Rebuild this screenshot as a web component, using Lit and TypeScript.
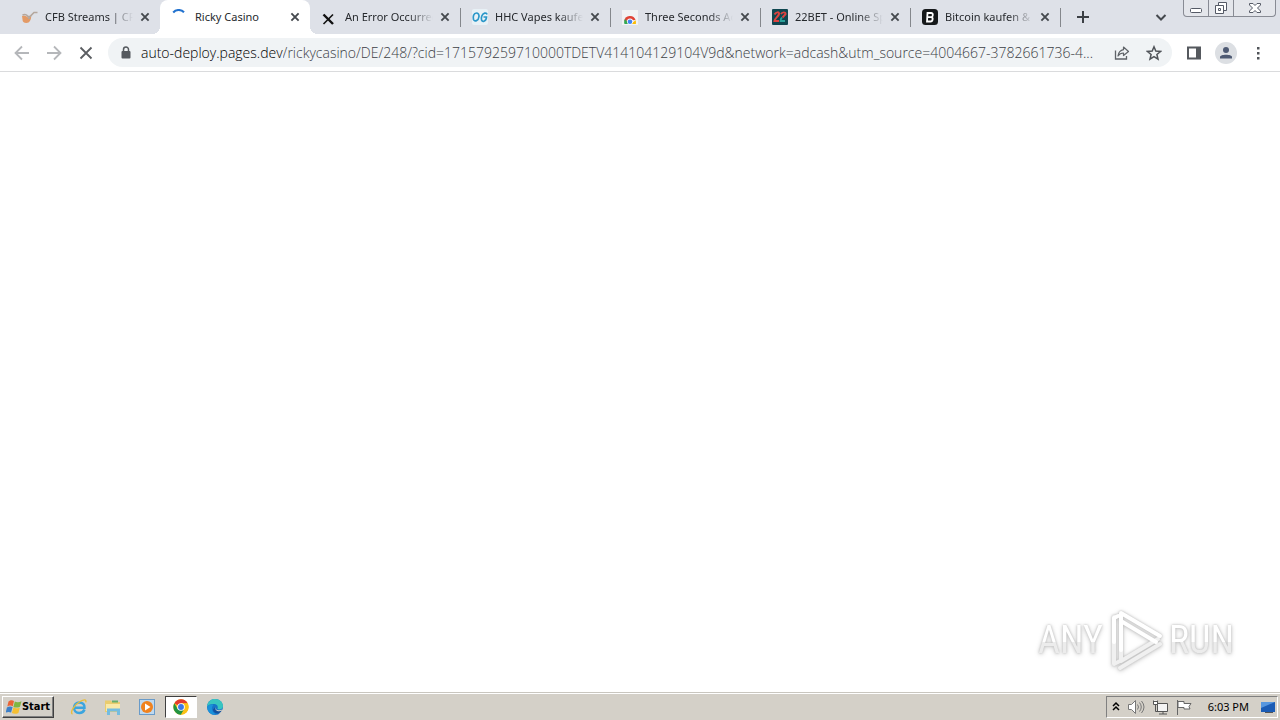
import { LitElement, html, svg, css, TemplateResult } from "lit";
import { customElement, property } from "lit/decorators.js";
import { classMap } from "lit/directives/class-map.js";

const cross = html`<svg width="10" height="10" viewBox="0 0 10 10"><path d="M1.4 1.4l7.2 7.2M8.6 1.4l-7.2 7.2" stroke="#45494e" stroke-width="1.9" fill="none"/></svg>`;

const chromeDisc = (s: number) => html`<svg width=${s} height=${s} viewBox="0 0 48 48">
  <circle cx="24" cy="24" r="23" fill="#fbc116"/>
  <path d="M24 24L4.1 12.5A23 23 0 0 1 43.9 12.5H24z" fill="#e33b2e"/>
  <path d="M4.1 12.5A23 23 0 0 0 24 47L34 29.7 24 24 14 29.7z" fill="#229342"/>
  <path d="M24 13.5h19.9A23 23 0 0 1 24 47l10-17.3z" fill="#fbc116"/>
  <circle cx="24" cy="24" r="11.5" fill="#fff"/><circle cx="24" cy="24" r="8.8" fill="#3b78e7"/></svg>`;

const icons: Record<string, TemplateResult> = {
  cfb: html`<svg width="16" height="16" viewBox="0 0 16 16"><path d="M0 7c2-.6 4-.2 5.200.9 1.500.8 3 .6 4-.3-.2 3.500-1.500 6.400-4.700 6.400-3 0-4-1.500-4-3.500z" fill="#e39a66"/><path d="M.5 6c2.500-1 4.500 0 5 1.200 1.500 1 3 .3 4-1.200L12 3.500h3.500M6 9.500l2-.5" fill="none" stroke="#b4a79d" stroke-width="1.600"/></svg>`,
  spin: html`<svg width="16" height="16" viewBox="0 0 16 16"><path d="M1.200 3.500A7.200 7.200 0 0 1 12 3.300" fill="none" stroke="#2272cf" stroke-width="2"/></svg>`,
  x: html`<svg width="16" height="16" viewBox="0 0 16 16"><path d="M1.500 5.500L11 15" stroke="#111" stroke-width="2.400"/><path d="M11 5.500L1.500 15" stroke="#111" stroke-width="1.600"/></svg>`,
  og: html`<svg width="16" height="16" viewBox="0 0 16 16"><rect width="16" height="16" rx="2" fill="#e8f1f6"/><path d="M4.500 4C1.500 4 .8 8 1.500 10.500 2.500 13 6.500 12 7 7.500 7.200 5.500 6 4 4.500 4zM15 5.500c-.5-2.300-4-1.800-5.200 1.500C8.500 10.500 9.800 13 12 12.200c1.500-.5 2.400-2 2.500-4.200h-3" fill="none" stroke="#2b97c9" stroke-width="1.700"/></svg>`,
  store: html`<svg width="16" height="16" viewBox="0 0 16 16"><rect y="1" width="16" height="15" fill="#f1f3f4"/><path d="M2.200 12A5.800 5.800 0 0 1 13.500 11L8 11.500z" fill="#e04235"/><path d="M2.200 14c-.3-2 .2-3 1-4L7 15H2.500z" fill="#34a853"/><path d="M13.500 11.200c.5 1 .5 2.500.3 3.800H9z" fill="#fbbc04"/><circle cx="8" cy="12.500" r="3" fill="#fff"/><circle cx="8" cy="12.700" r="2.300" fill="#4285f4"/></svg>`,
  bet: html`<svg width="16" height="16" viewBox="0 0 16 16"><rect width="16" height="16" rx="1" fill="#0f4650"/><path d="M2.500 5.500C4 3 7.500 2.500 7 5S3 9 2.500 12H7" fill="none" stroke="#dc433f" stroke-width="2"/><path d="M10 8.500c-1 1-1.500 2-1.500 3.500H13" fill="none" stroke="#2ba19a" stroke-width="1.800"/><path d="M9 5.200C10 3 13.800 2.700 13.600 5L10.500 8.500" fill="none" stroke="#dc433f" stroke-width="1.900"/></svg>`,
  bit: html`<svg width="16" height="16" viewBox="0 0 16 16"><rect width="16" height="16" rx="3.500" fill="#16191b"/><path d="M5.500 4h3.700c2.300 0 2 3.700.1 4.100 2.100.3 1.700 4.400-.8 4.400H5z M6 8.200h3.500" fill="none" stroke="#fff" stroke-width="1.800"/></svg>`,
};

@customElement("browser-tab")
class BrowserTab extends LitElement {
  @property() icon = "";
  @property() label = "";
  @property({ type: Boolean }) active = false;
  @property({ type: Boolean }) divided = false;
  static styles = css`
    :host { flex: 0 1 150px; min-width: 0; display: block; }
    .tab { box-sizing: border-box; height: 34px; display: flex; align-items: center; padding: 0 10px 0 12px; position: relative; }
    .tab.active { background: #fff; border-radius: 8px 8px 0 0; }
    .tab.active::before, .tab.active::after { content: ""; position: absolute; bottom: 0; width: 8px; height: 8px; }
    .tab.active::before { left: -8px; background: radial-gradient(circle at 0 0, transparent 8px, #fff 8px); }
    .tab.active::after { right: -8px; background: radial-gradient(circle at 100% 0, transparent 8px, #fff 8px); }
    .tab.divided::after { content: ""; position: absolute; right: -1px; top: 8px; width: 1px; height: 19px; background: #84878c; }
    .icon { flex: none; display: flex; width: 16px; height: 16px; margin-right: 7px; }
    .title { flex: 1; min-width: 0; overflow: hidden; white-space: nowrap; font-size: 11px; line-height: 16px; color: #26292d; -webkit-mask-image: linear-gradient(90deg, #000 72%, transparent 100%); }
    .active .title { -webkit-mask-image: none; }
    button { flex: none; display: flex; margin: 0 0 0 7px; padding: 0; border: 0; background: none; }
  `;
  render() {
    return html`<div class=${classMap({ tab: true, active: this.active, divided: this.divided })}>
      <span class="icon">${icons[this.icon]}</span><span class="title">${this.label}</span>
      <button aria-label="Close tab">${cross}</button></div>`;
  }
}

@customElement("app-root")
class AppRoot extends LitElement {
  static styles = css`
    :host { display: flex; flex-direction: column; min-height: 100vh; background: #fff; font-family: "Noto Sans", "Open Sans", sans-serif; }
    button { font: inherit; padding: 0; margin: 0; border: 0; background: none; display: flex; align-items: center; justify-content: center; }
    .strip { display: flex; align-items: center; height: 34px; background: #dee1e8; padding-left: 10px; }
    .new { width: 24px; height: 24px; margin-left: 11px; }
    .space { flex: 1; }
    .caption { align-self: flex-start; display: flex; box-sizing: border-box; height: 17px; margin: 0 4px 0 14px; border: 1px solid #888b94; border-top: 0; border-radius: 0 0 4px 4px; background: #e4e6eb; }
    .caption button { width: 25px; border-right: 1px solid #888b94; }
    .caption button:last-child { width: 41px; border: 0; }
    .bar { display: flex; align-items: center; height: 37px; border-bottom: 1px solid #dadbdd; padding: 0 6px; }
    .bar > button { width: 32px; height: 32px; flex: none; }
    .omni { flex: 1; min-width: 0; box-sizing: border-box; height: 29px; margin: 0 6px; padding: 0 2px 0 10px; border-radius: 15px; background: #f0f3f5; display: flex; align-items: center; }
    .address { flex: 1; min-width: 0; display: flex; align-items: center; font-family: "Open Sans", "Noto Sans", sans-serif; font-weight: 300; font-size: 14px; line-height: 20px; color: #000; margin: 0 8px 0 7px; }
    .address input { flex: 1; min-width: 0; height: 20px; border: 0; padding: 0; margin: 0; background: none; outline: none; font: inherit; color: #3c4045; text-overflow: ellipsis; }
    .omni button { width: 32px; height: 28px; flex: none; }
    main { flex: 1; display: flex; align-items: flex-end; justify-content: flex-end; padding: 0 46px 20px 0; }
    .mark { display: flex; align-items: center; gap: 3px; font: 38px/44px "Liberation Sans Narrow", "Roboto Condensed", sans-serif; filter: drop-shadow(0 0 1px #bdbdbd) drop-shadow(0 1px 2px #d0d0d0); }
    .mark span { color: transparent; background: linear-gradient(#fff 54%, #ececec 54%); -webkit-background-clip: text; background-clip: text; }
    footer { display: flex; align-items: center; height: 26px; background: #d4d0c8; border-top: 1px solid #c9c6bf; box-shadow: inset 0 1px #fff; padding: 1px 2px 0; }
    .start { width: 52px; height: 22px; box-sizing: border-box; border: 1px solid; border-color: #fff #404040 #404040 #fff; box-shadow: inset -1px -1px #808080; font: bold 11px/14px "DejaVu Sans Condensed", sans-serif; color: #000; }
    .quick { display: flex; margin-left: 9px; gap: 2px; }
    .quick button { width: 32px; height: 22px; box-sizing: border-box; }
    .quick .on { background: #fff; border: 1px solid; border-color: #404040 #fff #fff #404040; }
    .tray { display: flex; align-items: center; box-sizing: border-box; height: 22px; gap: 7px; padding: 0 1px 0 5px; border: 1px solid; border-color: #808080 #fff #fff #808080; }
    time { font-size: 11px; line-height: 16px; color: #000; margin: 0 4px 0 9px; white-space: nowrap; }
  `;

  private tabs = [
    { icon: "cfb", label: "CFB Streams | CFB" },
    { icon: "spin", label: "Ricky Casino", active: true },
    { icon: "x", label: "An Error Occurred", divided: true },
    { icon: "og", label: "HHC Vapes kaufen", divided: true },
    { icon: "store", label: "Three Seconds Ad", divided: true },
    { icon: "bet", label: "22BET - Online Sp", divided: true },
    { icon: "bit", label: "Bitcoin kaufen & li", divided: true },
  ];

  private glyph(size: number, body: unknown) {
    return html`<svg width=${size} height=${size} viewBox="0 0 16 16" fill="none">${body}</svg>`;
  }

  render() {
    return html`
      <div class="strip">
        ${this.tabs.map((t) => html`<browser-tab .icon=${t.icon} .label=${t.label} .active=${!!t.active} .divided=${!!t.divided}></browser-tab>`)}
        <button class="new" aria-label="New tab">${this.glyph(16, svg`<path d="M8 2v12M2 8h12" stroke="#3c4045" stroke-width="2"/>`)}</button>
        <span class="space"></span>
        <button aria-label="Search tabs">${this.glyph(16, svg`<path d="M3.500 6L8 10.500 12.500 6" stroke="#45494e" stroke-width="2"/>`)}</button>
        <div class="caption">
          <button aria-label="Minimize"><svg width="14" height="16" viewBox="0 0 14 16"><rect x="1.500" y="8.500" width="11" height="4" rx="1" fill="#fff" stroke="#555a66"/></svg></button>
          <button aria-label="Restore"><svg width="14" height="16" viewBox="0 0 14 16"><path d="M4.500 2.500h8v8h-8z" fill="#fff" stroke="#555a66"/><path d="M1.500 5.500h8v8h-8z" fill="#fff" stroke="#555a66"/><path d="M4.500 8.500h2v2h-2z" stroke="#555a66" fill="#fff"/></svg></button>
          <button aria-label="Close"><svg width="14" height="16" viewBox="0 0 14 16"><path d="M1.500 3.500h3.500l2 2 2-2h3.500v1.500L9.500 8l3 3v1.500H9l-2-2-2 2H1.500V11l3-3-3-3z" fill="#fff" stroke="#555a66"/></svg></button>
        </div>
      </div>
      <div class="bar">
        <button aria-label="Back">${this.glyph(16, svg`<path d="M15 8H2M8 1.500L1.500 8 8 14.500" stroke="#b5b7ba" stroke-width="1.800"/>`)}</button>
        <button aria-label="Forward">${this.glyph(16, svg`<path d="M1 8h13M8 1.500L14.500 8 8 14.500" stroke="#b5b7ba" stroke-width="1.800"/>`)}</button>
        <button aria-label="Stop">${this.glyph(16, svg`<path d="M2.500 2.500l11 11M13.500 2.500l-11 11" stroke="#5a5d61" stroke-width="1.800"/>`)}</button>
        <div class="omni">
          ${this.glyph(16, svg`<rect x="3.500" y="6" width="9" height="7.500" rx="1" fill="#55595e"/><path d="M5.500 7V4.500a2.500 2.500 0 0 1 5 0V7" stroke="#55595e" stroke-width="1.500"/>`)}
          <label class="address"><span>auto-deploy.pages.dev</span><input aria-label="Address" .value=${"/rickycasino/DE/248/?cid=171579259710000TDETV414104129104V9d&network=adcash&utm_source=4004667-3782661736-4..."} /></label>
          <button aria-label="Share">${this.glyph(16, svg`<path d="M1.500 5.500v8.500h11v-3" stroke="#5f6368" stroke-width="1.300"/><path d="M9.500 2l5 4.500-5 4V8C7 8 5.300 9 4 11c.5-3.500 2.500-5.800 5.500-6.300z" stroke="#5f6368" stroke-width="1.200" stroke-linejoin="round"/>`)}</button>
          <button aria-label="Bookmark">${this.glyph(16, svg`<path d="M8 1.800l1.800 4.300 4.700.4-3.600 3 1.100 4.600L8 11.600l-4 2.500 1.100-4.600-3.600-3 4.700-.4z" stroke="#505459" stroke-width="1.500"/>`)}</button>
        </div>
        <button aria-label="Side panel">${this.glyph(16, svg`<path d="M2 2.500h12v11H2z" stroke="#55595e" stroke-width="2"/><path d="M10 2.500h4v11h-4z" fill="#55595e"/>`)}</button>
        <button aria-label="Profile"><svg width="22" height="22" viewBox="0 0 22 22"><circle cx="11" cy="11" r="11" fill="#dcdfe3"/><circle cx="11" cy="8" r="3" fill="#4e5a73"/><path d="M5 16.500v-1.500c0-3 12-3 12 0v1.500z" fill="#4e5a73"/></svg></button>
        <button aria-label="Menu">${this.glyph(16, svg`<path d="M7 2h2.500v2.500H7zM7 7h2.500v2.500H7zM7 12h2.500v2.500H7z" fill="#505459"/>`)}</button>
      </div>
      <main>
        <div class="mark"><span>ANY</span>
          <svg width="60" height="64" viewBox="0 0 60 64"><g fill="none" stroke-width="4" stroke-linejoin="round" stroke-linecap="round"><path d="M14 60l40-24M8 9v47l6-3" stroke="#f0f0f0"/><path d="M15 30v23l37-22" stroke="#f0f0f0"/><path d="M15 42V5l39 23M15 13l35 21M8 34V10l4-2" stroke="#fff"/></g></svg>
          <span>RUN</span></div>
      </main>
      <footer>
        <button class="start"><svg width="16" height="16" viewBox="0 0 16 16"><path d="M2.500 2.500c2-1.800 4-1.500 5.500-.5L6.800 7.200c-1.700-.9-3.700-.9-5.500.2z" fill="#ea6435"/><path d="M8.800 2.500c2 1 4.500.9 6.700-.3l-1.500 5.500c-2.300 1.100-4.500 1.200-6.600.2z" fill="#7fb641"/><path d="M.9 8.500c1.800-1.100 4-1.300 5.700-.4l-1.500 5.500c-1.700-.9-3.700-.9-5.500.2z" fill="#3c7fc8"/><path d="M7.400 8.600c2 1 4.300.9 6.500-.2l-1.500 5.500c-2 1.100-4.500 1.200-6.500.2z" fill="#f5bf32"/></svg>Start</button>
        <div class="quick">
          <button aria-label="Internet Explorer"><svg width="18" height="18" viewBox="0 0 18 18"><path d="M14.500 11.500C13.500 14 11.500 15 9.300 15 6 15 4 12.500 4 9.800S6 4.500 9.300 4.500c3.300 0 5.500 2.200 5.200 5.300H5" fill="none" stroke="#3ba5df" stroke-width="2.500"/><path d="M2.500 16C-.5 15 4 7 10 3.500c4-2.300 6.500-2.300 5.800.8" fill="none" stroke="#e8bd3b" stroke-width="1.400"/></svg></button>
          <button aria-label="Explorer"><svg width="18" height="18" viewBox="0 0 18 18"><path d="M1 2.500h6l1 1.500h8V14H1z" fill="#e9cc6e"/><path d="M2 6h14v7H2z" fill="#f9e9a8"/><path d="M3 17v-6.500h13V17h-3v-3.500H6V17z" fill="#74bce0"/><path d="M8 2.500h6v2H8z" fill="#66ae6d"/></svg></button>
          <button aria-label="Media Player"><svg width="18" height="18" viewBox="0 0 18 18"><rect x="1.500" y="1.500" width="15" height="15" fill="#bfd9ef" stroke="#699bc9"/><circle cx="9" cy="9" r="6" fill="#f0821e"/><path d="M7 5.500v7L12.500 9z" fill="#fff"/></svg></button>
          <button class="on" aria-label="Chrome">${chromeDisc(16)}</button>
          <button aria-label="Edge"><svg width="18" height="18" viewBox="0 0 18 18"><circle cx="9" cy="9" r="8" fill="#1674c8"/><path d="M1 9C1.500 3.500 5 1 9 1c5 0 8 3.500 8 7 0 3-3 4-5.500 3 .8-2 .3-4.500-3-5C5 5.600 2 7 1 9z" fill="#38c5c0"/><path d="M7.500 7c-3 2.500-1.500 7.500 2.500 9.500-5 1-9-3-8.500-7.500C3 6.500 6 6 7.500 7z" fill="#1a92da"/><path d="M9.500 9c-.5 3 3 4.200 7 2.500l1.500 3-2 1c-4 .5-8-2-6.500-6.500z" fill="#d4d0c8"/><path d="M9.200 9c-.8 4 3.500 5 6.600 3.600-2 4.400-8.800 3.400-8.800-1z" fill="#12519f"/></svg></button>
        </div>
        <span class="space"></span>
        <div class="tray">
          <button aria-label="Show hidden icons"><svg width="8" height="12" viewBox="0 0 8 12"><path d="M1 5l3-3 3 3M1 9l3-3 3 3" fill="none" stroke="#000" stroke-width="1.500"/></svg></button>
          <svg width="18" height="16" viewBox="0 0 18 16"><path d="M1.500 5.500h3l4-4v13l-4-4h-3z" fill="#fff" stroke="#777"/><path d="M10.500 5.500q2 2.500 0 5M12.500 3.500q3.500 4.500 0 9M14.500 2q5 6 0 12" fill="none" stroke="#777"/></svg>
          <svg width="17" height="16" viewBox="0 0 17 16"><path d="M5.500 4.500h10v8h-10zM7 15h8M11 12.500V15" fill="#f4f4f4" stroke="#555"/><path d="M3.500 5.500v7h4" fill="none" stroke="#555"/><path d="M1.500 1.500v4h4v-4M1.500 2.500h4" fill="#fff" stroke="#555"/></svg>
          <svg width="16" height="16" viewBox="0 0 16 16"><path d="M1.500 1v15M2 2.500h6v2h7l-2 3 1 2.500H8v-1.500H2z" fill="#fff" stroke="#666"/></svg>
          <time>6:03 PM</time>
          <svg width="16" height="16" viewBox="0 0 16 16"><path d="M1 3h14v10H1z" fill="#1b5cb5"/><path d="M1 3h14L1 9z" fill="#5797df"/><path d="M5 13.500h8" stroke="#555"/></svg>
        </div>
      </footer>`;
  }
}
